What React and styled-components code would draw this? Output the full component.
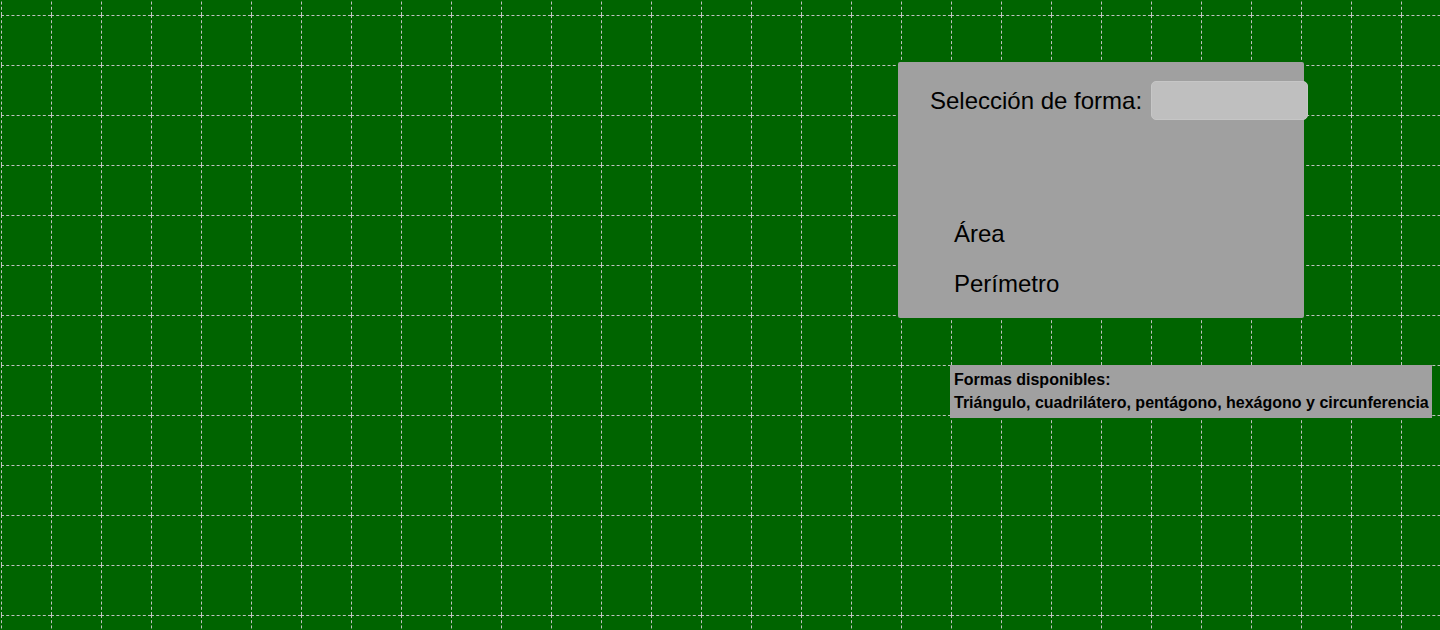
import styled, { createGlobalStyle } from "styled-components";

const GlobalStyle = createGlobalStyle`
  html, body {
    margin: 0;
    padding: 0;
  }
  body {
    font-family: "Liberation Sans", Arial, sans-serif;
    background: #006400;
    overflow: hidden;
  }
`;

const COLS = 30;
const ROWS = 14;

const Page = styled.main`
  position: relative;
  width: 100vw;
  height: 100vh;
  overflow: hidden;
  background: #006400;
`;

const Board = styled.div`
  position: absolute;
  inset: 0;
  z-index: 0;
  overflow: hidden;
`;

const Cells = styled.div`
  display: grid;
  grid-template-columns: repeat(${COLS}, 50px);
  grid-auto-rows: 50px;
  margin-top: -35px;
  margin-left: 1px;
`;

const Cell = styled.div`
  box-sizing: border-box;
  border-left: 1px dashed #c0c0c0;
  border-top: 1px dashed #c0c0c0;
`;

const Sidebar = styled.section`
  position: relative;
  z-index: 1;
  display: flex;
  flex-direction: column;
  align-items: flex-start;
  margin-left: 898px;
  padding-top: 62px;
`;

const Panel = styled.div`
  box-sizing: border-box;
  width: 406px;
  height: 256px;
  background: #a0a0a0;
  border-radius: 2px;
  padding: 19px 0 0 32px;
  display: flex;
  flex-direction: column;
`;

const SelectRow = styled.label`
  display: flex;
  align-items: center;
  gap: 9px;
  font-size: 24px;
  color: #000;
  white-space: nowrap;
`;

const ShapeInput = styled.input`
  flex: none;
  box-sizing: border-box;
  width: 157px;
  height: 39px;
  margin: 0 -3px 0 0;
  border: 1px solid #c6c6c6;
  border-radius: 5px;
  background: #bfbfbf;
  font-family: inherit;
  font-size: 18px;
  outline: none;
`;

const Results = styled.ul`
  list-style: none;
  margin: 100px 0 0 0;
  padding: 0 0 0 24px;
  display: flex;
  flex-direction: column;
  gap: 22px;
`;

const ResultItem = styled.li`
  font-size: 24px;
  line-height: 28px;
  color: #000;
`;

const InfoBox = styled.div`
  margin: 47px 0 0 52px;
  width: 482px;
  box-sizing: border-box;
  padding: 3px 4px 4px 4px;
  background: #a0a0a0;
  font-size: 16px;
  font-weight: 700;
  line-height: 23px;
  color: #000;
  white-space: nowrap;
`;

export default function App() {
  const cells = Array.from({ length: COLS * ROWS });
  return (
    <Page>
      <GlobalStyle />
      <Board>
        <Cells>
          {cells.map((_, i) => (
            <Cell key={i} />
          ))}
        </Cells>
      </Board>
      <Sidebar>
        <Panel>
          <SelectRow>
            Selección de forma:
            <ShapeInput type="text" />
          </SelectRow>
          <Results>
            <ResultItem>Área</ResultItem>
            <ResultItem>Perímetro</ResultItem>
          </Results>
        </Panel>
        <InfoBox>
          <div>Formas disponibles:</div>
          <div>Triángulo, cuadrilátero, pentágono, hexágono y circunferencia</div>
        </InfoBox>
      </Sidebar>
    </Page>
  );
}
